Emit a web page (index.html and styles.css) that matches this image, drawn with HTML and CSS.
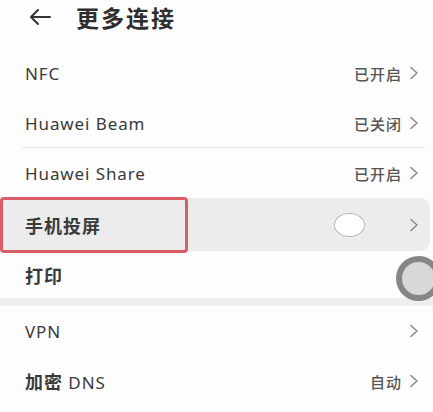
FILE: index.html
```html
<!DOCTYPE html>
<html>
<head>
  <title>更多连接</title>
  <link rel="stylesheet" href="styles.css">
</head>
<body>
  <div class="page">
    <div class="header">
      <svg class="back" width="24" height="18" viewBox="0 0 24 18">
        <path d="M22 9H3M10 2L3 9l7 7" fill="none" stroke="#333" stroke-width="2" stroke-linecap="round" stroke-linejoin="round"/>
      </svg>
      <h1>更多连接</h1>
    </div>

    <div class="row">
      <span class="label">NFC</span>
      <span class="value">已开启</span>
      <svg class="chev" width="10" height="14" viewBox="0 0 10 14"><path d="M2 1.5l6 5.5-6 5.5" fill="none" stroke="#8c8c8c" stroke-width="1.6" stroke-linecap="round" stroke-linejoin="round"/></svg>
    </div>
    <div class="row line">
      <span class="label">Huawei Beam</span>
      <span class="value">已关闭</span>
      <svg class="chev" width="10" height="14" viewBox="0 0 10 14"><path d="M2 1.5l6 5.5-6 5.5" fill="none" stroke="#8c8c8c" stroke-width="1.6" stroke-linecap="round" stroke-linejoin="round"/></svg>
    </div>
    <div class="row">
      <span class="label">Huawei Share</span>
      <span class="value">已开启</span>
      <svg class="chev" width="10" height="14" viewBox="0 0 10 14"><path d="M2 1.5l6 5.5-6 5.5" fill="none" stroke="#8c8c8c" stroke-width="1.6" stroke-linecap="round" stroke-linejoin="round"/></svg>
    </div>
    <div class="row pressed">
      <span class="label cn">手机投屏</span>
      <span class="toggle"></span>
      <svg class="chev" width="10" height="14" viewBox="0 0 10 14"><path d="M2 1.5l6 5.5-6 5.5" fill="none" stroke="#8c8c8c" stroke-width="1.6" stroke-linecap="round" stroke-linejoin="round"/></svg>
      <div class="mark"></div>
    </div>
    <div class="row print">
      <span class="label cn">打印</span>
      <svg class="chev" width="10" height="14" viewBox="0 0 10 14"><path d="M2 1.5l6 5.5-6 5.5" fill="none" stroke="#8c8c8c" stroke-width="1.6" stroke-linecap="round" stroke-linejoin="round"/></svg>
      <div class="touch"></div>
    </div>

    <div class="gap"></div>

    <div class="row">
      <span class="label">VPN</span>
      <svg class="chev" width="10" height="14" viewBox="0 0 10 14"><path d="M2 1.5l6 5.5-6 5.5" fill="none" stroke="#8c8c8c" stroke-width="1.6" stroke-linecap="round" stroke-linejoin="round"/></svg>
    </div>
    <div class="row">
      <span class="label"><span class="cn">加密</span> DNS</span>
      <span class="value">自动</span>
      <svg class="chev" width="10" height="14" viewBox="0 0 10 14"><path d="M2 1.5l6 5.5-6 5.5" fill="none" stroke="#8c8c8c" stroke-width="1.6" stroke-linecap="round" stroke-linejoin="round"/></svg>
    </div>
  </div>
</body>
</html>
```

FILE: styles.css
```css
body { margin: 0; background: #fdfdfd; font-family: "Noto Sans", "Noto Sans CJK SC", sans-serif; color: #333; overflow: hidden; }
.page { width: 433px; height: 412px; overflow: hidden; position: relative; }

.header { height: 48px; display: flex; align-items: center; padding-left: 28px; }
.back { margin-right: 24px; margin-top: -14px; }
h1 { margin: 0; margin-top: -14px; font-size: 23px; font-weight: 700; letter-spacing: 2px; color: #2e2e2e; font-family: "Noto Sans CJK SC", sans-serif; }

.row { height: 50px; display: flex; align-items: center; padding: 0 14px 0 25px; position: relative; }
.row.line::after { content: ""; position: absolute; left: 22px; right: 8px; bottom: 0; height: 1px; background: #e8e8e8; }
.label { flex: 1; font-size: 17px; letter-spacing: 0.9px; color: #3a3a3a; }
.cn { font-family: "Noto Sans CJK SC", sans-serif; font-weight: 700; font-size: 18px; letter-spacing: 1px; }
.value { font-family: "Noto Sans CJK SC", sans-serif; font-size: 15px; letter-spacing: 1px; color: #555; font-weight: 500; margin-right: 7px; }
.chev { display: block; }

.pressed { height: 53px; background: #ececec; border-radius: 0 10px 10px 0; margin-right: 3px; padding-right: 11px; }
.toggle { width: 29px; height: 22px; border: 1.5px solid #b8b8b8; border-radius: 50%; background: #fff; margin-right: 44px; }
.mark { position: absolute; left: 0; top: -1px; width: 182px; height: 50px; border: 3px solid #d95c66; border-radius: 4px; }

.print { height: 47px; }
.touch { position: absolute; left: 396px; top: 5px; width: 33px; height: 33px; border: 6px solid #868686; border-radius: 50%; background: #d8d8d8; }

.gap { height: 8px; background: #efefef; }
```
